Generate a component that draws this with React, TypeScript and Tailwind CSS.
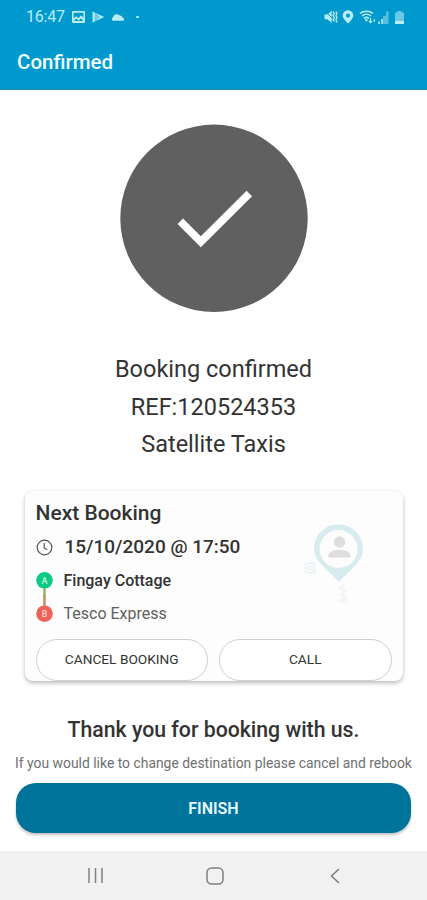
import React from "react";

function StatusBar() {
	return (
		<div className="flex h-8 shrink-0 items-center justify-between pl-[26px] pr-[23px] pt-0.5 text-[#b9edf5]">
			<div className="flex items-center">
				<span className="w-[46px] text-base tracking-[-0.2px]">16:47</span>
				<svg width="13" height="12" viewBox="0 0 13 12" fill="currentColor">
					<path fillRule="evenodd" d="M1 0h11a1 1 0 0 1 1 1v10a1 1 0 0 1-1 1H1a1 1 0 0 1-1-1V1a1 1 0 0 1 1-1zm.6 1.7v5.6l2.6-2 2.4 2 2.3-3 2.5 2.5V1.7zm.2 8.300h9.400L9 7.200 6.800 9.700 4.200 7.600z" />
				</svg>
				<svg className="ml-[7px]" width="13" height="12" viewBox="0 0 13 12">
					<path d="M.7.5v11L12 6z" fill="#6fcbe5" />
					<path d="M.7.5 2.500 1.500v9L.7 11.500zM4 2.300 12 6 4 9.700 8 6z" fill="currentColor" />
				</svg>
				<svg className="ml-1.5" width="14" height="8" viewBox="0 0 15 8" fill="currentColor">
					<path d="M2 8A2 2 0 0 1 2 4.500 4.200 4.200 0 0 1 9.400 2.500 3.200 3.200 0 0 1 12.500 4.800 1.700 1.700 0 0 1 13.300 8z" />
				</svg>
				<span className="ml-[11px] size-[2.500px] rounded-full bg-current" />
			</div>

			<div className="flex items-center">
				<svg width="14" height="14" viewBox="0 0 14 14" fill="currentColor">
					<path d="M.5 4.500h2.700L7.700.8v12L3.200 9.200H.5z" />
					<path d="M.8.8 8 8" stroke="#0099ce" strokeWidth="1" />
					<path d="M9 1.500 10.500 3.500 9 5.500 10.500 7.500 9 9.500 10.500 11.500M12 1.500 13 3.500 12 5.500 13 7.500 12 9.500 13 12.500" stroke="currentColor" fill="none" strokeWidth="1.300" />
				</svg>
				<svg className="ml-1" width="12" height="14" viewBox="0 0 12 14" fill="currentColor">
					<path fillRule="evenodd" d="M6 .2a5.300 5.300 0 0 1 5.300 5.300C11.300 9 6 13.500 6 13.500S.7 9 .7 5.500A5.300 5.300 0 0 1 6 .2zm0 3.300a2.100 2.100 0 1 0 0 4.200 2.100 2.100 0 0 0 0-4.200z" />
				</svg>
				<svg className="ml-[5px]" width="17" height="14" viewBox="0 0 17 14" fill="none" stroke="currentColor" strokeWidth="1.500">
					<path d="M1 3.500C4.500.5 10.500.5 14 3.500M3 6c2.600-2.200 6.400-2.200 9 0M5 8.300c1.600-1.200 3.400-1.200 5 0" />
					<path d="M5.500 9 7.500 12 9 9.500z" fill="currentColor" stroke="none" />
					<path d="M11.500 8v4.500M10 11l1.500 1.700L13 11M15.300 12V9" strokeWidth="1.200" />
				</svg>
				<svg className="ml-[2px]" width="11" height="13" viewBox="0 0 11 13">
					<path d="M0 13V10.500h2V13zM3 13V8h2v5z" fill="#8edbee" />
					<path d="M5 13V5h3v8zM8 13V.5h2.500V13z" fill="#5bbede" />
				</svg>
				<svg className="ml-1.5" width="9" height="13" viewBox="0 0 9 13">
					<path d="M2.500 0h4v1.500H9V10H0V1.500h2.500z" fill="#6bc9e4" />
					<path d="M0 10h9v3H0z" fill="currentColor" />
				</svg>
			</div>
		</div>
	);
}

function ClockIcon() {
	return (
		<svg width="17" height="17" viewBox="0 0 17 17" fill="none" stroke="#555" strokeWidth="1.200">
			<circle cx="8.500" cy="8.500" r="7.300" />
			<path d="M8.200 4v5l3 1.800" />
		</svg>
	);
}

function RouteMarkers() {
	return (
		<svg className="mr-[11px]" width="17" height="52" viewBox="0 0 17 52">
			<path d="M8.500 16v10" stroke="#8fb660" strokeWidth="2.500" />
			<path d="M8.500 24v12" stroke="#c98b5c" strokeWidth="2.500" />
			<circle cx="8.500" cy="9.300" r="8.300" fill="#0acb83" />
			<circle cx="8.500" cy="42.700" r="8.300" fill="#ee6258" />
			<text x="8.500" y="12.500" fontSize="9" fontWeight="500" textAnchor="middle" fill="#c5f7df">A</text>
			<text x="8.500" y="46" fontSize="9" fontWeight="500" textAnchor="middle" fill="#ffd5d0">B</text>
		</svg>
	);
}

function PassengerPin() {
	return (
		<svg className="absolute left-[278px] top-[32px]" width="64" height="84" viewBox="0 0 64 84">
			<path d="M35.500 1.500c13.500 0 24.500 10.500 24.500 24 0 12.500-9 17.500-24 33.500-15-16-25-21-25-33.500 0-13.500 11-24 24.500-24z" fill="#d8ebef" />
			<circle cx="35.500" cy="26" r="19" fill="#fdfdfd" />
			<circle cx="36.500" cy="19" r="5.700" fill="#dedede" />
			<path d="M25.500 34.500v-1.700c0-4 6-6 11-6s11 2 11 6v1.700z" fill="#dedede" />
			<path d="M2.500 40.500h9v9h-9zM5 43.500h4v3H5z" fill="none" stroke="#e3eef3" strokeWidth="1.200" />
			<path d="m41 61-4 4 5 3-4 4 5 2-5 4h6" fill="none" stroke="#f4f6f5" strokeWidth="3" />
		</svg>
	);
}

function BookingCard() {
	return (
		<div className="relative mx-auto mt-[27px] flex h-[190px] w-[378px] shrink-0 flex-col rounded-lg bg-[#fdfdfd] px-[11px] shadow-[0_2px_4px_rgba(0,0,0,0.28)]">
			<h2 className="mt-2 h-[28px] text-[21px] leading-[28px] font-medium">Next Booking</h2>
			<div className="mt-[7px] flex h-[28px] items-center gap-[12px]">
				<ClockIcon />
				<span className="text-[19px] font-medium">15/10/2020 @ 17:50</span>
			</div>
			<div className="mt-[9px] flex">
				<RouteMarkers />
				<div className="flex flex-col pt-px text-base">
					<span className="h-[33px] leading-[18px] font-medium">Fingay Cottage</span>
					<span className="leading-[18px] text-[#606060]">Tesco Express</span>
				</div>
			</div>
			<PassengerPin />
			<div className="mt-auto flex gap-[11px]">
				<button className="h-[42px] flex-1 rounded-full border border-[#d0d0d0] bg-white text-[13.700px] text-[#333]">CANCEL BOOKING</button>
				<button className="h-[42px] flex-1 rounded-full border border-[#d0d0d0] bg-white text-[13.700px] text-[#333]">CALL</button>
			</div>
		</div>
	);
}

function NavigationBar() {
	return (
		<nav className="mt-auto flex h-[49px] shrink-0 items-center bg-[#f1f1f1] pl-[87px] text-[#808080]">
			<svg width="17" height="17" viewBox="0 0 17 17" stroke="currentColor" strokeWidth="1.500">
				<path d="M2 1v15M8.500 1v15M15 1v15" />
			</svg>
			<svg className="ml-[102px]" width="18" height="18" viewBox="0 0 18 18" fill="none" stroke="currentColor" strokeWidth="1.500">
				<rect x="1" y="1" width="16" height="16" rx="4.500" />
			</svg>
			<svg className="ml-[106px]" width="10" height="16" viewBox="0 0 10 16" fill="none" stroke="currentColor" strokeWidth="1.600">
				<path d="M9 1 1.500 8 9 15" />
			</svg>
		</nav>
	);
}

export default function App() {
	return (
		<div className="flex h-[900px] w-[427px] flex-col overflow-hidden bg-white font-[Roboto,sans-serif] text-[#333]">
			<header className="h-[90px] shrink-0 border-b border-[#2289b5] bg-[#0099ce]">
				<StatusBar />
				<h1 className="pl-[17px] pt-[15px] text-[20.500px] leading-[30px] font-medium text-[#f2ffff]">Confirmed</h1>
			</header>

			<svg className="mx-auto mt-[34px] shrink-0" width="190" height="189" viewBox="0 0 190 189">
				<circle cx="95" cy="94.300" r="93.700" fill="#606060" />
				<path d="m61.300 97.200 20.500 20.500 48.500-48.300" fill="none" stroke="#fff" strokeWidth="7.800" />
			</svg>

			<div className="mt-[38px] shrink-0 text-center text-[23.500px] leading-[37.500px]">
				<p>Booking confirmed</p>
				<p>REF:120524353</p>
				<p>Satellite Taxis</p>
			</div>

			<BookingCard />

			<p className="mt-[34px] shrink-0 text-center text-[21.250px] leading-[30px] font-medium">Thank you for booking with us.</p>
			<p className="mt-[8px] shrink-0 whitespace-nowrap pl-[15px] text-[13.900px] leading-[20px] text-[#707070]">If you would like to change destination please cancel and rebook</p>
			<button className="mx-auto mt-[10px] h-[50px] w-[395px] shrink-0 rounded-[20px] bg-[#00739a] pt-0.5 text-base font-semibold text-[#e8fbff] shadow-[0_2px_3px_rgba(0,0,0,0.25)]">FINISH</button>

			<NavigationBar />
		</div>
	);
}
